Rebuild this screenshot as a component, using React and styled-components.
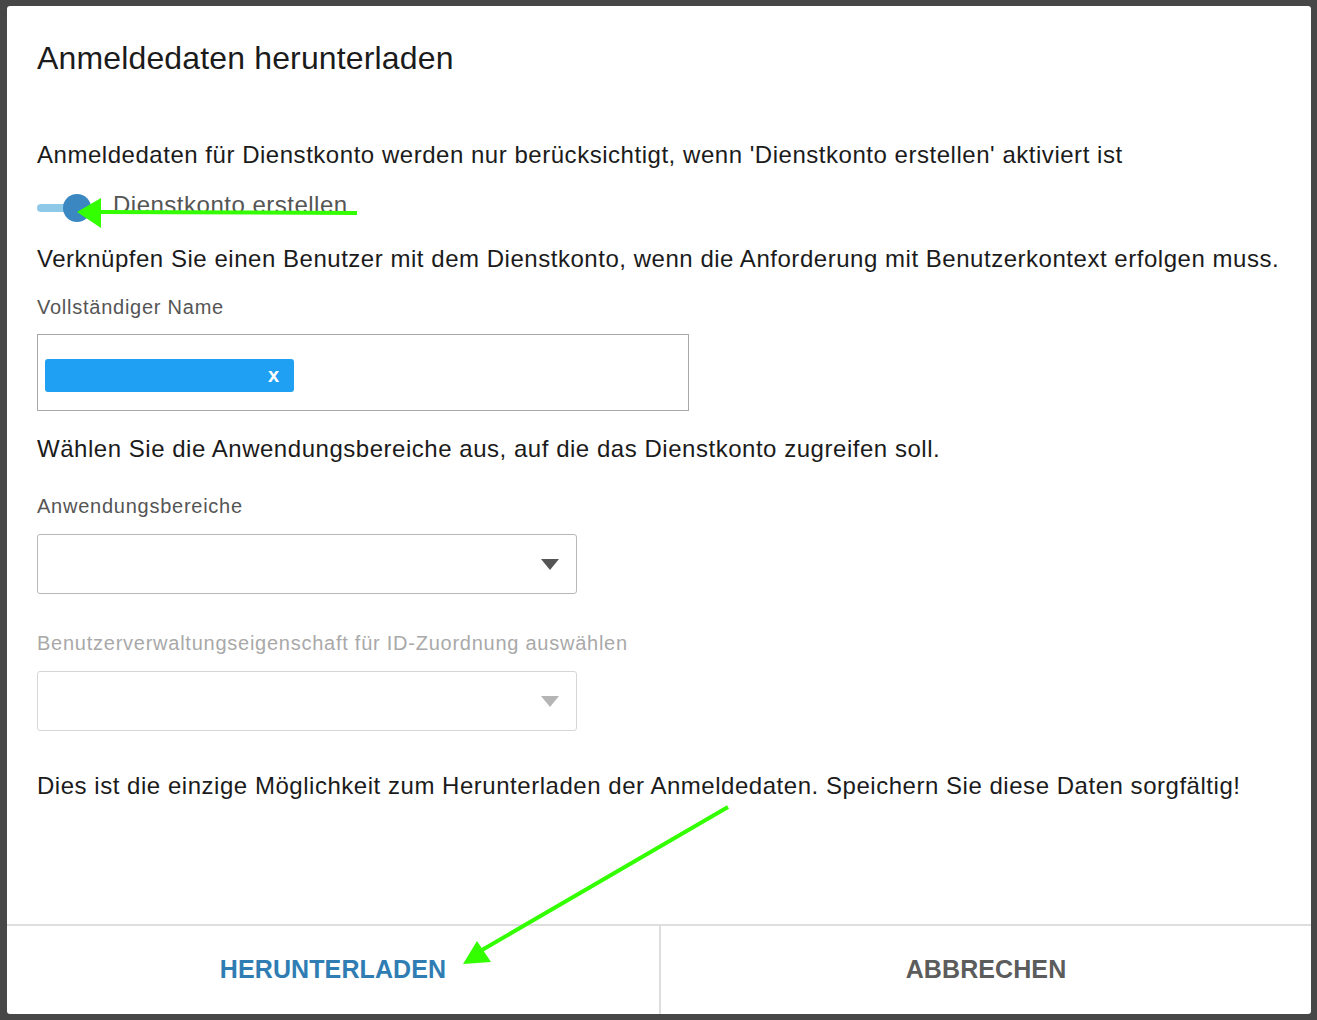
import React from "react";
import styled, { createGlobalStyle } from "styled-components";

const GlobalStyle = createGlobalStyle`
  html, body {
    margin: 0;
    padding: 0;
    background: #474747;
  }
  * {
    box-sizing: border-box;
  }
`;

const Backdrop = styled.div`
  position: relative;
  width: 100%;
  height: 1020px;
  padding: 6px 6px 6px 7px;
  background: #474747;
  font-family: "Liberation Sans", Arial, Helvetica, sans-serif;
  overflow: hidden;
`;

const Dialog = styled.div`
  height: 1008px;
  background: #ffffff;
  border-radius: 3px;
  display: flex;
  flex-direction: column;
`;

const Content = styled.div`
  flex: 1;
  padding: 34px 20px 0 30px;
`;

const Title = styled.h2`
  margin: 0 0 65px;
  font-size: 32px;
  line-height: 36px;
  font-weight: 400;
  letter-spacing: 0.15px;
  color: #1b1b1b;
`;

const Text = styled.p`
  margin: 0 0 ${({ $mb }) => $mb || 0}px;
  font-size: 24px;
  line-height: 28px;
  letter-spacing: 0.53px;
  white-space: nowrap;
  color: #1b1b1b;
`;

const ToggleRow = styled.div`
  display: flex;
  align-items: center;
  height: 28px;
  margin-bottom: 24px;
`;

const Track = styled.div`
  position: relative;
  width: 54px;
  height: 8px;
  margin-top: 2px;
  border-radius: 4px;
  background: #8fc9e8;
`;

const Thumb = styled.div`
  position: absolute;
  right: 0;
  top: -10px;
  width: 28px;
  height: 28px;
  border-radius: 50%;
  background: #3a87c2;
`;

const ToggleLabel = styled.span`
  margin: -5px 0 0 22px;
  font-size: 24px;
  line-height: 28px;
  letter-spacing: 0.5px;
  color: #555555;
`;

const FieldLabel = styled.div`
  margin-bottom: ${({ $mb }) => $mb ?? 16}px;
  font-size: 20px;
  line-height: 24px;
  letter-spacing: 0.75px;
  color: ${({ $disabled }) => ($disabled ? "#a9a9a9" : "#555555")};
`;

const TagInput = styled.div`
  width: 652px;
  height: 77px;
  margin-bottom: 24px;
  padding: 24px 7px;
  border: 1px solid #a8a8a8;
`;

const Chip = styled.div`
  width: 249px;
  height: 33px;
  display: flex;
  align-items: center;
  justify-content: flex-end;
  padding-right: 15px;
  border-radius: 3px;
  background: #1fa0f3;
  color: #ffffff;
  font-size: 20px;
  font-weight: 700;
`;

const Select = styled.div`
  width: 540px;
  height: 60px;
  margin-bottom: ${({ $mb }) => $mb || 0}px;
  display: flex;
  align-items: center;
  justify-content: flex-end;
  padding-right: 17px;
  border: 1px solid ${({ $disabled }) => ($disabled ? "#d6d6d6" : "#b8b8b8")};
  border-radius: 3px;
`;

const Caret = styled.span`
  width: 0;
  height: 0;
  margin-top: 1px;
  border-left: 9px solid transparent;
  border-right: 9px solid transparent;
  border-top: 11px solid ${({ $disabled }) => ($disabled ? "#b5b5b5" : "#555555")};
`;

const Footer = styled.div`
  height: 90px;
  display: grid;
  grid-template-columns: 652px 1fr;
  border-top: 2px solid #dedede;
`;

const FooterButton = styled.button`
  border: none;
  border-left: ${({ $divider }) => ($divider ? "2px solid #dedede" : "none")};
  background: transparent;
  padding: 0 0 2px;
  font-family: inherit;
  font-size: 25px;
  font-weight: 700;
  letter-spacing: 0.1px;
  color: ${({ $primary }) => ($primary ? "#2f7db3" : "#5c5c5c")};
  cursor: pointer;
`;

const Annotations = styled.svg`
  position: absolute;
  top: 0;
  left: 0;
  pointer-events: none;
`;

export default function App() {
  return (
    <>
      <GlobalStyle />
      <Backdrop>
        <Dialog>
          <Content>
            <Title>Anmeldedaten herunterladen</Title>
            <Text $mb={24}>
              Anmeldedaten für Dienstkonto werden nur berücksichtigt, wenn
              'Dienstkonto erstellen' aktiviert ist
            </Text>
            <ToggleRow>
              <Track>
                <Thumb />
              </Track>
              <ToggleLabel>Dienstkonto erstellen</ToggleLabel>
            </ToggleRow>
            <Text $mb={22}>
              Verknüpfen Sie einen Benutzer mit dem Dienstkonto, wenn die
              Anforderung mit Benutzerkontext erfolgen muss.
            </Text>
            <FieldLabel $mb={15}>Vollständiger Name</FieldLabel>
            <TagInput>
              <Chip>x</Chip>
            </TagInput>
            <Text $mb={31}>
              Wählen Sie die Anwendungsbereiche aus, auf die das Dienstkonto
              zugreifen soll.
            </Text>
            <FieldLabel>Anwendungsbereiche</FieldLabel>
            <Select $mb={37}>
              <Caret />
            </Select>
            <FieldLabel $disabled>
              Benutzerverwaltungseigenschaft für ID-Zuordnung auswählen
            </FieldLabel>
            <Select $disabled $mb={41}>
              <Caret $disabled />
            </Select>
            <Text>
              Dies ist die einzige Möglichkeit zum Herunterladen der
              Anmeldedaten. Speichern Sie diese Daten sorgfältig!
            </Text>
          </Content>
          <Footer>
            <FooterButton $primary>HERUNTERLADEN</FooterButton>
            <FooterButton $divider>ABBRECHEN</FooterButton>
          </Footer>
        </Dialog>
        <Annotations width="1317" height="1020" viewBox="0 0 1317 1020">
          <g fill="#33ff00" stroke="#33ff00">
            <line x1="357" y1="213" x2="98" y2="212" strokeWidth="4" />
            <polygon points="77,212 101,198 101,228" stroke="none" />
            <line x1="728" y1="807" x2="482" y2="950" strokeWidth="4" />
            <polygon points="463,964 477,941 491,962" stroke="none" />
          </g>
        </Annotations>
      </Backdrop>
    </>
  );
}
